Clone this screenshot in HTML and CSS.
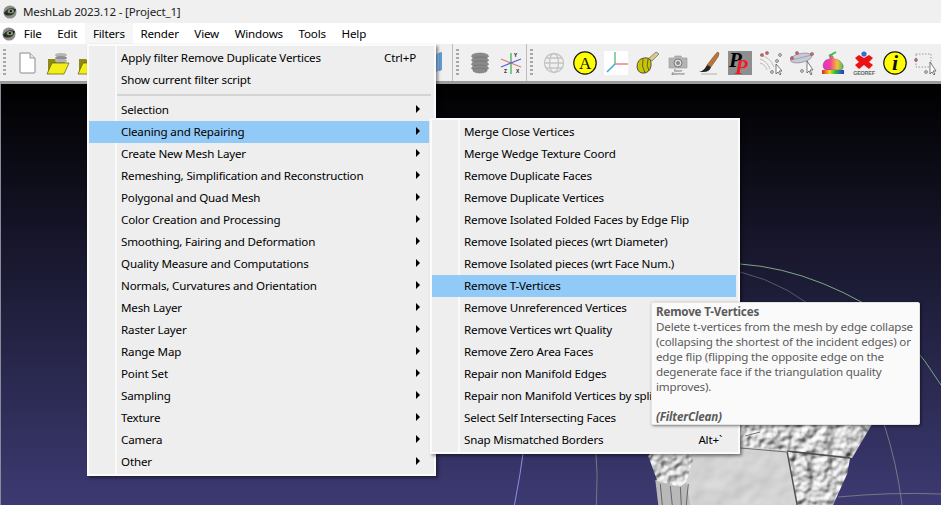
FILE: index.html
```html
<!DOCTYPE html>
<html>
<head>
    <title>MeshLab 2023.12 - [Project_1]</title>
    <link rel="stylesheet" href="styles.css">
</head>
<body>
    <!-- Title bar -->
    <div class="titlebar">
        <svg class="app-icon" viewBox="0 0 16 16"><use href="#eye"/></svg>
        <span>MeshLab 2023.12 - [Project_1]</span>
    </div>

    <!-- Menu bar -->
    <div class="menubar">
        <svg class="app-icon" viewBox="0 0 16 16">
            <symbol id="eye" viewBox="0 0 16 16">
                <circle cx="8" cy="8" r="7.5" fill="#8d8d8d"/>
                <path d="M1 9 Q7 1 15 5 Q12 13 5 12 Q2 12 1 9Z" fill="#2b2b2b"/>
                <ellipse cx="9" cy="7" rx="3.6" ry="2.4" fill="#7fa06a"/>
                <circle cx="9" cy="7" r="1.3" fill="#111"/>
            </symbol>
            <use href="#eye"/>
        </svg>
        <div class="menu-title">File</div>
        <div class="menu-title">Edit</div>
        <div class="menu-title open">Filters</div>
        <div class="menu-title">Render</div>
        <div class="menu-title">View</div>
        <div class="menu-title">Windows</div>
        <div class="menu-title">Tools</div>
        <div class="menu-title">Help</div>
    </div>

    <!-- Toolbar -->
    <div class="toolbar">
        <div class="grip"></div>
        <div class="tool">
            <svg viewBox="0 0 24 24"><path d="M5 2H15L20 7V21Q20 22 19 22H6Q5 22 5 21Z" fill="#fff" stroke="#8a8a8a"/><path d="M15 2V7H20" fill="#e6e6e6" stroke="#9a9a9a"/></svg>
        </div>
        <div class="tool">
            <svg viewBox="0 0 24 24">
                <path d="M2 8H9L11 10V22H2Z" fill="#8f8a12"/>
                <ellipse cx="15" cy="4" rx="6" ry="2" fill="#b5b5b5"/><ellipse cx="15" cy="7" rx="6" ry="2" fill="#8f8f8f"/><ellipse cx="15" cy="10" rx="6" ry="2" fill="#b5b5b5"/><ellipse cx="15" cy="13" rx="6" ry="2" fill="#8f8f8f"/>
                <path d="M6 12H23L18 23H1Z" fill="#f3ee1a" stroke="#5d5a08" stroke-width=".7"/>
            </svg>
        </div>
        <div class="tool">
            <svg viewBox="0 0 24 24">
                <path d="M2 8H9L11 10V22H2Z" fill="#8f8a12"/>
                <path d="M6 12H23L18 23H1Z" fill="#f3ee1a" stroke="#5d5a08" stroke-width=".7"/>
            </svg>
        </div>
        <div class="tool-spacer"></div>
        <svg class="cube" viewBox="0 0 10 21"><path d="M0 3 L10 0V18L0 21Z" fill="#8dbde8"/><path d="M7 1 L10 0V18L7 19Z" fill="#5f9bd2"/></svg>
        <div class="tool-sep"></div>
        <div class="grip"></div>
        <div class="tool">
            <svg viewBox="0 0 24 24">
                <g fill="#8a8a8a" stroke="#5f5f5f" stroke-width=".7" stroke-dasharray="1.2 .8">
                    <ellipse cx="12" cy="5" rx="8.5" ry="3"/>
                    <ellipse cx="12" cy="9" rx="8.5" ry="3"/>
                    <ellipse cx="12" cy="13" rx="8.5" ry="3"/>
                    <ellipse cx="12" cy="17" rx="8.5" ry="3"/>
                    <ellipse cx="12" cy="19.5" rx="7" ry="2.5"/>
                </g>
            </svg>
        </div>
        <div class="tool">
            <svg viewBox="0 0 24 24">
                <path d="M12 2V23" stroke="#7ec88a" stroke-width="2"/>
                <path d="M2 8L22 16" stroke="#e07a7a" stroke-width="1.2"/>
                <path d="M2 16L22 8" stroke="#5560d8" stroke-width="1.2"/>
                <text x="15" y="6" class="axis-label">Y</text><text x="5" y="22" class="axis-label">Z</text><text x="17" y="22" class="axis-label">X</text>
            </svg>
        </div>
        <div class="tool-sep"></div>
        <div class="grip"></div>
        <div class="tool">
            <svg viewBox="0 0 24 24" fill="none" stroke="#c4c4c4" stroke-width="1.3"><circle cx="12" cy="12" r="9.5"/><ellipse cx="12" cy="12" rx="4.5" ry="9.5"/><path d="M2.5 12H21.5M4 7H20M4 17H20"/></svg>
        </div>
        <div class="tool">
            <svg viewBox="0 0 24 24"><circle cx="12" cy="12" r="11.2" fill="#ffff00" stroke="#111" stroke-width="1.2"/><text x="12" y="18" class="icon-a">A</text></svg>
        </div>
        <div class="tool">
            <svg viewBox="0 0 24 24"><rect width="24" height="24" fill="#fff"/><path d="M11 13V1" stroke="#4caf6a" stroke-width="1.2"/><path d="M11 13H24" stroke="#f08080" stroke-width="1.5"/><path d="M11 13L3 21" stroke="#35a7e8" stroke-width="1.5"/></svg>
        </div>
        <div class="tool">
            <svg viewBox="0 0 24 24">
                <path d="M13 8L21 1L24 3L17 10Z" fill="#d8c98a" stroke="#555" stroke-width=".6"/>
                <path d="M2 16Q2 8 9 7Q15 6 16 11Q17 20 10 22Q3 23 2 16Z" fill="#c9c400" stroke="#333" stroke-width=".8"/>
                <path d="M8 8Q6 15 10 22M13 8Q11 15 14 20" stroke="#444" fill="none" stroke-width=".8"/>
            </svg>
        </div>
        <div class="tool">
            <svg viewBox="0 0 24 24">
                <path d="M3 7H8L9 5H15L16 7H21V17H3Z" fill="#b4b4b4" stroke="#999" stroke-width=".6"/>
                <circle cx="12" cy="12" r="4" fill="#dedede" stroke="#777"/>
                <circle cx="12" cy="12" r="2" fill="#8b8b8b"/>
                <text x="12" y="20.5" class="tiny-label">Raster</text>
                <text x="12" y="23.5" class="tiny-label">Alignment</text>
            </svg>
        </div>
        <div class="tool">
            <svg viewBox="0 0 24 24">
                <path d="M21 1Q23 2 21 6L14 16L10 14L17 5Q19 2 21 1Z" fill="#b5763a" stroke="#6e4720" stroke-width=".5"/>
                <path d="M10 14L14 16Q13 21 6 21L2 21Q7 20 10 14Z" fill="#222"/>
                <path d="M4 23H20" stroke="#bbb" stroke-width="1.2"/>
            </svg>
        </div>
        <div class="tool">
            <svg viewBox="0 0 24 24"><rect width="24" height="24" fill="#8e8e8e"/><text x="1" y="16" class="icon-p black">P</text><text x="7" y="23" class="icon-p red">P</text></svg>
        </div>
        <div class="tool">
            <svg viewBox="0 0 24 24">
                <path d="M1 8Q8 10 11 18M1 12Q6 13 8 19M1 4Q11 6 15 16" fill="none" stroke="#bdbdbd"/>
                <circle cx="3" cy="4" r="1.6" fill="#e05a5a" stroke="#666" stroke-width=".5"/><circle cx="8" cy="2" r="1.6" fill="#e05a5a" stroke="#666" stroke-width=".5"/>
                <circle cx="21" cy="4" r="1.4" fill="#ddd" stroke="#555" stroke-width=".7"/><circle cx="13" cy="21" r="1.4" fill="#ddd" stroke="#555" stroke-width=".7"/>
                <circle cx="18" cy="10" r="1.4" fill="#ddd" stroke="#555" stroke-width=".7"/>
                <path d="M17 13V23L19 21L21 24L22 23L20 20L23 20Z" fill="#fff" stroke="#444" stroke-width=".7"/>
            </svg>
        </div>
        <div class="tool">
            <svg viewBox="0 0 24 24">
                <ellipse cx="11" cy="7" rx="11" ry="4.5" transform="rotate(-12 11 7)" fill="#c9c9da" stroke="#8a8a9a" stroke-width=".7"/>
                <path d="M1 9L22 4" stroke="#888" stroke-width=".6"/>
                <circle cx="7" cy="2" r="1.6" fill="#e05a5a" stroke="#666" stroke-width=".5"/><circle cx="22" cy="3" r="1.6" fill="#e05a5a" stroke="#666" stroke-width=".5"/><circle cx="2" cy="7" r="1.6" fill="#e05a5a" stroke="#666" stroke-width=".5"/>
                <circle cx="12" cy="20" r="1.4" fill="#ddd" stroke="#555" stroke-width=".7"/>
                <path d="M17 10V22L19 20L21 24L22 23L20 19L23 19Z" fill="#fff" stroke="#444" stroke-width=".7"/>
            </svg>
        </div>
        <div class="tool">
            <svg viewBox="0 0 24 24">
                <defs><linearGradient id="rainbow" x1="0" x2="1" y1="0" y2="0"><stop offset="0" stop-color="#e82fd0"/><stop offset=".35" stop-color="#f0409a"/><stop offset=".7" stop-color="#f8c030"/><stop offset="1" stop-color="#40c070"/></linearGradient><linearGradient id="base" x1="0" x2="1" y1="0" y2="0"><stop offset="0" stop-color="#e02020"/><stop offset=".35" stop-color="#e8e020"/><stop offset=".6" stop-color="#20c040"/><stop offset="1" stop-color="#3030e0"/></linearGradient></defs>
                <path d="M2 14Q3 8 9 8Q8 5 9 3Q12 4 13 8Q19 8 22 14Q23 18 20 19H6Q2 19 2 14Z" fill="url(#rainbow)" stroke="#555" stroke-width=".4"/>
                <path d="M8 5L15 1" stroke="#32c050" stroke-width="2"/>
                <rect x="1" y="19" width="22" height="4" fill="url(#base)"/>
            </svg>
        </div>
        <div class="tool">
            <svg viewBox="0 0 24 24">
                <path d="M3 7L7 4L12 7L17 4L21 7L17 11L21 14L17 18L12 14L7 18L3 14L7 11Z" fill="#ee1111"/>
                <circle cx="12" cy="3" r="2.6" fill="#2f6fd0"/>
                <text x="12" y="23.5" class="georef">GEOREF</text>
            </svg>
        </div>
        <div class="tool">
            <svg viewBox="0 0 24 24"><circle cx="12" cy="12" r="11.2" fill="#ffff00" stroke="#111" stroke-width="1.2"/><text x="12" y="19" class="icon-i">i</text></svg>
        </div>
        <div class="tool">
            <svg viewBox="0 0 24 24">
                <rect x="2" y="3" width="15" height="13" fill="none" stroke="#999" stroke-dasharray="1.5 1.5"/>
                <circle cx="2" cy="9" r="1.5" fill="#e05a5a" stroke="#666" stroke-width=".5"/>
                <circle cx="12" cy="21" r="1.4" fill="#ddd" stroke="#555" stroke-width=".7"/>
                <path d="M16 11V23L18 21L20 24L21 23L19 20L22 20Z" fill="#fff" stroke="#444" stroke-width=".7"/>
            </svg>
        </div>
    </div>

    <!-- 3D view -->
    <div class="viewport">
        <svg class="scene" viewBox="0 0 941 421" preserveAspectRatio="none">
            <defs>
                <filter id="rock" x="0" y="0" width="100%" height="100%" color-interpolation-filters="sRGB">
                    <feTurbulence type="fractalNoise" baseFrequency="0.1" numOctaves="2" seed="4" result="noise"/>
                    <feDiffuseLighting in="noise" surfaceScale="3.5" lighting-color="#ffffff" result="lit">
                        <feDistantLight azimuth="235" elevation="55"/>
                    </feDiffuseLighting>
                    <feComposite in="lit" in2="SourceAlpha" operator="in"/>
                </filter>
                <filter id="smooth" x="0" y="0" width="100%" height="100%" color-interpolation-filters="sRGB">
                    <feTurbulence type="fractalNoise" baseFrequency="0.05" numOctaves="2" seed="9" result="noise"/>
                    <feDiffuseLighting in="noise" surfaceScale="1" lighting-color="#e8e8e8" result="lit">
                        <feDistantLight azimuth="235" elevation="65"/>
                    </feDiffuseLighting>
                    <feComposite in="lit" in2="SourceAlpha" operator="in"/>
                </filter>
            </defs>
            <!-- trackball rings -->
            <g fill="none">
                <path d="M700 181Q780 172 865 220Q910 250 941 301" stroke="#7ea77e"/>
                <path d="M740 188Q790 200 830 238" stroke="#585868"/>
                <path d="M884 340Q897 380 902 421" stroke="#77777f"/>
                <path d="M838 413Q890 408 941 410" stroke="#77777f"/>
                <path d="M595 360Q598 390 596 421" stroke="#77777f"/>
                <path d="M524 360Q520 390 514 421" stroke="#8f8fe8"/>
            </g>
            <!-- statue -->
            <path filter="url(#smooth)" d="M690 360H790L800 421H680Z"/>
            <path fill="#b9b9b9" d="M655 396L658 421H690L686 398Z"/>
            <path fill="none" stroke="#666" d="M662 421L660 400M672 421L670 402M681 421L680 402M688 400L686 421"/>
            <path filter="url(#rock)" d="M648 372L652 368H690L693 375L686 398L680 403L657 397Z"/>
            <path filter="url(#rock)" d="M735 335H875L852 374L790 367L736 362Z"/>
            <path filter="url(#rock)" d="M787 368L850 374L847 390L833 421H797Z"/>
            <path fill="none" stroke="#505050" stroke-width="1.4" d="M787 368L797 421M787 367L850 374"/>
            <path fill="none" stroke="#6b6b6b" d="M740 364L787 368M745 352L760 348"/>
        </svg>
    </div>

    <!-- Filters menu -->
    <div class="menu main-menu">
        <div class="menu-item"><span>Apply filter Remove Duplicate Vertices</span><span class="shortcut">Ctrl+P</span></div>
        <div class="menu-item"><span>Show current filter script</span></div>
        <div class="menu-sep"></div>
        <div class="menu-item sub">Selection</div>
        <div class="menu-item sub active">Cleaning and Repairing</div>
        <div class="menu-item sub">Create New Mesh Layer</div>
        <div class="menu-item sub">Remeshing, Simplification and Reconstruction</div>
        <div class="menu-item sub">Polygonal and Quad Mesh</div>
        <div class="menu-item sub">Color Creation and Processing</div>
        <div class="menu-item sub">Smoothing, Fairing and Deformation</div>
        <div class="menu-item sub">Quality Measure and Computations</div>
        <div class="menu-item sub">Normals, Curvatures and Orientation</div>
        <div class="menu-item sub">Mesh Layer</div>
        <div class="menu-item sub">Raster Layer</div>
        <div class="menu-item sub">Range Map</div>
        <div class="menu-item sub">Point Set</div>
        <div class="menu-item sub">Sampling</div>
        <div class="menu-item sub">Texture</div>
        <div class="menu-item sub">Camera</div>
        <div class="menu-item sub">Other</div>
    </div>

    <!-- Cleaning and Repairing submenu -->
    <div class="menu sub-menu">
        <div class="menu-item">Merge Close Vertices</div>
        <div class="menu-item">Merge Wedge Texture Coord</div>
        <div class="menu-item">Remove Duplicate Faces</div>
        <div class="menu-item">Remove Duplicate Vertices</div>
        <div class="menu-item">Remove Isolated Folded Faces by Edge Flip</div>
        <div class="menu-item">Remove Isolated pieces (wrt Diameter)</div>
        <div class="menu-item">Remove Isolated pieces (wrt Face Num.)</div>
        <div class="menu-item active">Remove T-Vertices</div>
        <div class="menu-item">Remove Unreferenced Vertices</div>
        <div class="menu-item">Remove Vertices wrt Quality</div>
        <div class="menu-item">Remove Zero Area Faces</div>
        <div class="menu-item">Repair non Manifold Edges</div>
        <div class="menu-item">Repair non Manifold Vertices by splitting</div>
        <div class="menu-item">Select Self Intersecting Faces</div>
        <div class="menu-item"><span>Snap Mismatched Borders</span><span class="shortcut">Alt+`</span></div>
    </div>

    <!-- Tooltip -->
    <div class="tooltip">
        <b>Remove T-Vertices</b><br>
        Delete t-vertices from the mesh by edge collapse<br>
        (collapsing the shortest of the incident edges) or<br>
        edge flip (flipping the opposite edge on the<br>
        degenerate face if the triangulation quality<br>
        improves).<br>
        <br>
        <b><i>(FilterClean)</i></b>
    </div>
</body>
</html>
```

FILE: styles.css
```css
/* General */
html, body {
    height: 100%;
}

body {
    margin: 0;
    font-family: "Noto Sans", Arial, sans-serif;
    font-size: 11.6px;
    letter-spacing: -0.17px;
    color: #000;
    background: #f0f0f0;
    display: flex;
    flex-direction: column;
    overflow: hidden;
    position: relative;
}

/* Title bar */
.titlebar {
    height: 23px;
    flex: none;
    display: flex;
    align-items: center;
    gap: 6px;
    padding-left: 3px;
    background: #f0f0f0;
    color: #222;
}

.app-icon {
    width: 14px;
    height: 14px;
    flex: none;
}

/* Menu bar */
.menubar {
    height: 21px;
    flex: none;
    display: flex;
    align-items: center;
    padding-left: 2px;
    background: #fff;
}

.menu-title {
    height: 100%;
    display: flex;
    align-items: center;
    padding: 0 7.8px;
}

.menu-title.open {
    background: #f6f6f6;
}

/* Toolbar */
.toolbar {
    height: 37px;
    flex: none;
    display: flex;
    align-items: center;
    background: #f0f0f0;
    border-bottom: 3px solid #9c9c9c;
    padding-left: 3px;
}

.grip {
    width: 3px;
    height: 28px;
    margin-right: 5px;
    flex: none;
    background: repeating-linear-gradient(#a8a8a8 0 2px, transparent 2px 4px);
}

.tool {
    width: 31px;
    height: 24px;
    flex: none;
    display: flex;
    justify-content: center;
}

.tool svg {
    width: 24px;
    height: 24px;
    display: block;
}

.tool-spacer {
    flex: 1;
}

.cube {
    width: 10px;
    height: 21px;
    flex: none;
    margin-right: 10px;
}

.tool-sep {
    width: 1px;
    height: 37px;
    flex: none;
    margin-right: 3px;
    background: #bdbdbd;
}

.axis-label {
    font-size: 5px;
    font-weight: bold;
    fill: #333;
}

.tiny-label {
    font-size: 3px;
    text-anchor: middle;
    fill: #555;
}

.icon-a {
    font-family: "Liberation Serif", serif;
    font-size: 17px;
    text-anchor: middle;
    fill: #111;
}

.icon-i {
    font-family: "Liberation Serif", serif;
    font-size: 22px;
    font-weight: bold;
    font-style: italic;
    text-anchor: middle;
    fill: #111;
}

.icon-p {
    font-family: "Liberation Serif", serif;
    font-size: 21px;
    font-weight: bold;
    font-style: italic;
}

.icon-p.black {
    fill: #000;
}

.icon-p.red {
    fill: #ee1c25;
}

.georef {
    font-family: "Liberation Sans", sans-serif;
    font-size: 5.4px;
    font-weight: bold;
    text-anchor: middle;
    fill: #666;
}

/* 3D view */
.viewport {
    flex: 1;
    min-height: 0;
    background: linear-gradient(#000, #3c3a72);
    border-left: 1px solid #8a8a9a;
}

.scene {
    width: 100%;
    height: 100%;
    display: block;
}

/* Menus */
.menu {
    position: absolute;
    box-sizing: border-box;
    background: #eeeeee;
    border: 2px solid #fbfbfb;
    padding-top: 1px;
    box-shadow: 2px 2px 3px rgba(0, 0, 0, 0.45);
}

/* Icon column */
.menu::before {
    content: "";
    position: absolute;
    top: 0;
    bottom: 0;
    left: 26px;
    width: 2px;
    background: #f9f9f9;
}

.main-menu {
    left: 87px;
    top: 44px;
    width: 349px;
    height: 432px;
}

.sub-menu {
    left: 430px;
    top: 118px;
    width: 310px;
    height: 336px;
}

.menu-item {
    height: 22px;
    box-sizing: border-box;
    display: flex;
    align-items: center;
    justify-content: space-between;
    padding: 0 16px 2px 32px;
    position: relative;
    white-space: nowrap;
}

.main-menu .menu-item {
    padding-right: 18px;
}

.menu-item.active {
    background: #91c9f7;
    margin-right: 5px;
}

.main-menu .menu-item.active {
    padding-right: 13px;
}

.sub-menu .menu-item.active {
    margin-right: 2px;
}

.sub::after {
    content: "";
    position: absolute;
    right: 14px;
    top: 6px;
    border-left: 4px solid #000;
    border-top: 4px solid transparent;
    border-bottom: 4px solid transparent;
}

.main-menu .sub.active::after {
    right: 9px;
}

.shortcut {
    flex: none;
}

.menu-sep {
    height: 2px;
    margin: 3px 3px 3px 28px;
    background: #d4d4d4;
}

/* Tooltip */
.tooltip {
    position: absolute;
    left: 651px;
    top: 302px;
    width: 269px;
    height: 123px;
    box-sizing: border-box;
    padding: 1px 4px;
    background: #fafafa;
    border: 1px solid #e4e4e4;
    border-radius: 2px;
    box-shadow: 1px 1px 3px rgba(0, 0, 0, 0.5);
    color: #5a5a5a;
    line-height: 15px;
    white-space: nowrap;
}
```
